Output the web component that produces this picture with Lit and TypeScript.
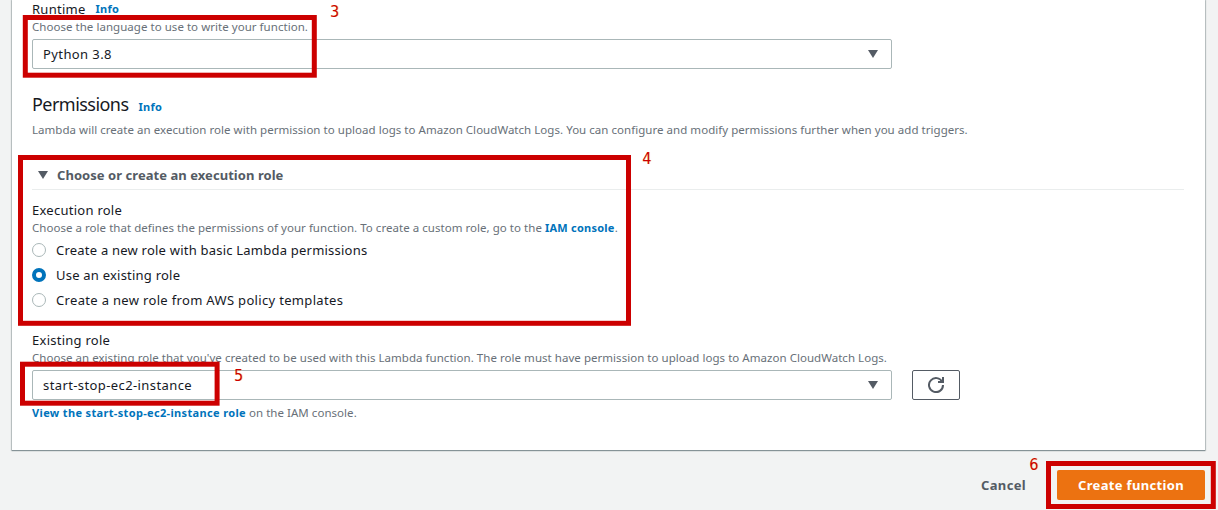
import { LitElement, html, css, svg } from "lit";
import { customElement, property } from "lit/decorators.js";

const caret = html`<svg width="10" height="8" viewBox="0 0 10 8"><path d="M0 0H10L5 8Z" fill="#545b64"/></svg>`;

@customElement("select-box")
class SelectBox extends LitElement {
  @property() value = "";
  static styles = css`
    :host { display: flex; align-items: center; justify-content: space-between; box-sizing: border-box;
      width: 860px; height: 30px; padding: 0 13px 0 10px; border: 1px solid #aab7b8; border-radius: 2px;
      background: #fff; color: #16191f; font-size: 13px; line-height: 28px; letter-spacing: 0.4px; }
    svg { display: block; }
  `;
  render() {
    return html`<span>${this.value}</span>${caret}`;
  }
}

@customElement("radio-option")
class RadioOption extends LitElement {
  @property({ type: Boolean, reflect: true }) checked = false;
  static styles = css`
    :host { display: flex; align-items: center; height: 25px; gap: 10px; color: #16191f; font-size: 13px; }
    .dot { box-sizing: border-box; width: 14px; height: 14px; border: 1px solid #aab7b8; border-radius: 50%; background: #fff; }
    :host([checked]) .dot { border: 4px solid #0073bb; }
  `;
  render() {
    return html`<span class="dot"></span><slot></slot>`;
  }
}

interface Mark { n: string; x: number; y: number; w: number; h: number; tx: number; ty: number; }
const marks: Mark[] = [
  { n: "3", x: 22.8, y: 15, w: 294, h: 62.7, tx: 330, ty: 17 },
  { n: "4", x: 18, y: 155, w: 613, h: 170.8, tx: 642.2, ty: 164 },
  { n: "5", x: 20, y: 361.7, w: 199.6, h: 44, tx: 234, ty: 381 },
  { n: "6", x: 1046, y: 461, w: 169.8, h: 48, tx: 1029.2, ty: 470 },
];

@customElement("app-root")
class AppRoot extends LitElement {
  static styles = css`
    :host { display: block; position: relative; width: 1218px; height: 510px; overflow: hidden; background: #f2f3f3;
      font-family: "Noto Sans", sans-serif; font-size: 13px; color: #16191f; white-space: nowrap; }
    .panel { box-sizing: border-box; height: 450px; margin: 0 13px 0 12px; padding: 0 20px; background: #fff;
      box-shadow: 0 1px 1px 0 rgba(0, 28, 36, 0.3), 0 0 1px 1px rgba(0, 28, 36, 0.2); }
    .label { height: 18px; line-height: 18px; letter-spacing: 0.26px; }
    .runtime { display: flex; gap: 10px; }
    .hint { height: 18px; line-height: 17px; font-size: 11.5px; color: #687078; letter-spacing: 0.038px; }
    .link { font-size: 11px; font-weight: 700; color: #0073bb; letter-spacing: 0.24px; }
    .link.view { letter-spacing: 0.345px; }
    .field { margin-top: 3px; }
    .heading { display: flex; gap: 10px; align-items: baseline; height: 24px; line-height: 24px; margin: 23px 0 5px; }
    .heading .title { font-size: 18px; letter-spacing: -0.54px; }
    .expander { display: flex; align-items: center; gap: 9px; box-sizing: border-box; height: 29px; margin: 22px 1px 11px 0;
      padding-left: 6px; border-bottom: 1px solid #eaeded; font-weight: 700; color: #545b64; letter-spacing: 0.05px; }
    .expander svg { display: block; }
    .a, .b { letter-spacing: 0.22px; }
    .c { letter-spacing: 0.33px; }
    .existing { margin-top: 19px; }
    .row { display: flex; gap: 20px; margin: 3px 0 4px; }
    .refresh { display: flex; align-items: center; justify-content: center; box-sizing: border-box; width: 48px; height: 30px;
      padding: 0; border: 1px solid #545b64; border-radius: 2px; background: #fff; }
    .footer { display: flex; justify-content: flex-end; align-items: center; height: 30px; gap: 31px; margin: 20px 13px 0 0;
      font-weight: 700; letter-spacing: 0.34px; }
    .cancel { color: #545b64; }
    .create { width: 148px; height: 30px; line-height: 30px; text-align: center; border-radius: 2px; background: #ec7211; color: #fff; }
    .marks { position: absolute; left: 0; top: 0; width: 1218px; height: 510px; pointer-events: none; }
    .marks rect { fill: none; stroke: #cc0000; stroke-width: 5; }
    .marks text { font: 16px "DejaVu Sans Condensed", "DejaVu Sans", sans-serif; font-stretch: condensed; fill: #cc0000; text-shadow: 1px 0 0 rgba(255, 235, 90, 0.6); }
  `;

  render() {
    return html`
      <section class="panel">
        <div class="label runtime"><span>Runtime</span><span class="link">Info</span></div>
        <div class="hint">Choose the language to use to write your function.</div>
        <select-box class="field" value="Python 3.8"></select-box>
        <div class="heading"><span class="title">Permissions</span><span class="link">Info</span></div>
        <div class="hint">Lambda will create an execution role with permission to upload logs to Amazon CloudWatch Logs. You can configure and modify permissions further when you add triggers.</div>
        <div class="expander">${caret}<span>Choose or create an execution role</span></div>
        <div class="label">Execution role</div>
        <div class="hint">Choose a role that defines the permissions of your function. To create a custom role, go to the <span class="link">IAM console</span>.</div>
        <radio-option class="a">Create a new role with basic Lambda permissions</radio-option>
        <radio-option class="b" checked>Use an existing role</radio-option>
        <radio-option class="c">Create a new role from AWS policy templates</radio-option>
        <div class="label existing">Existing role</div>
        <div class="hint">Choose an existing role that you've created to be used with this Lambda function. The role must have permission to upload logs to Amazon CloudWatch Logs.</div>
        <div class="row">
          <select-box value="start-stop-ec2-instance"></select-box>
          <button class="refresh" aria-label="Refresh">
            <svg width="16" height="16" viewBox="0 0 16 16" fill="none" stroke="#545b64" stroke-width="2">
              <path d="M10 5h5V0"/><path d="M15 8a7 7 0 1 1-.7-3"/>
            </svg>
          </button>
        </div>
        <div class="hint"><span class="link view">View the start-stop-ec2-instance role</span> on the IAM console.</div>
      </section>
      <div class="footer"><span class="cancel">Cancel</span><span class="create">Create function</span></div>
      <svg class="marks" viewBox="0 0 1218 510">
        ${marks.map((m) => svg`<rect x=${m.x + 2.5} y=${m.y + 2.5} width=${m.w - 5} height=${m.h - 5}></rect><text x=${m.tx} y=${m.ty}>${m.n}</text>`)}
      </svg>
    `;
  }
}
